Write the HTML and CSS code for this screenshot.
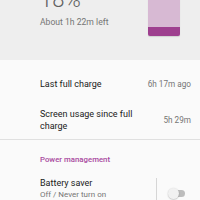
FILE: index.html
```html
<!DOCTYPE html>
<html>
<head>
<meta charset="utf-8">
<link rel="stylesheet" href="styles.css">
</head>
<body>
<div class="header">
  <div class="info">
    <div class="pct">18%</div>
    <div class="left">About 1h 22m left</div>
  </div>
  <div class="battery"><div class="level"></div></div>
</div>
<div class="list">
  <div class="row row1">
    <div class="title">Last full charge</div>
    <div class="value">6h 17m ago</div>
  </div>
  <div class="row row2">
    <div class="title wrap">Screen usage since full charge</div>
    <div class="value">5h 29m</div>
  </div>
  <div class="divider"></div>
  <div class="category">Power management</div>
  <div class="row row3">
    <div class="texts">
      <div class="title">Battery saver</div>
      <div class="summary">Off / Never turn on</div>
    </div>
    <div class="vsep"></div>
    <div class="switch"><div class="track"></div><div class="thumb"></div></div>
  </div>
</div>
</body>
</html>
```
FILE: styles.css
```css
html, body {
  margin: 0;
  padding: 0;
}
body {
  background: #fafafa;
  font-family: Roboto, "Noto Sans", sans-serif;
  width: 200px;
  height: 200px;
  overflow: hidden;
}
.header {
  background: #eeeeee;
  height: 60px;
  display: flex;
  padding-left: 40px;
  box-sizing: border-box;
}
.info {
  margin-top: -11px;
}
.pct {
  font-size: 22px;
  line-height: 22px;
  font-weight: 300;
  color: #616161;
}
.left {
  margin-top: 5px;
  font-size: 8.6px;
  line-height: 12px;
  color: #757575;
}
.battery {
  margin-left: auto;
  margin-right: 20px;
  margin-top: -20px;
  width: 32px;
  height: 56px;
  background: #d7b9d3;
  border-radius: 0 0 2px 2px;
  display: flex;
  flex-direction: column;
  justify-content: flex-end;
  overflow: hidden;
  box-shadow: 0 1px 1px rgba(0,0,0,0.12);
}
.level {
  height: 9px;
  background: #9e3f8f;
}
.row {
  display: flex;
  align-items: center;
  padding-left: 40px;
  padding-right: 9px;
}
.title {
  font-size: 9px;
  line-height: 12px;
  color: #212121;
}
.value {
  margin-left: auto;
  font-size: 8.2px;
  line-height: 12px;
  color: #757575;
}
.row1 {
  padding-top: 18px;
  padding-bottom: 18px;
}
.row2 {
  padding-top: 0;
  padding-bottom: 7px;
}
.wrap {
  width: 100px;
}
.divider {
  height: 1px;
  background: #e0e0e0;
}
.category {
  padding-left: 40px;
  margin-top: 14px;
  font-size: 7.8px;
  line-height: 12px;
  font-weight: 500;
  color: #a8499e;
}
.row3 {
  margin-top: 11px;
  align-items: flex-start;
  padding-right: 15px;
}
.summary {
  font-size: 8px;
  line-height: 12px;
  color: #757575;
}
.vsep {
  margin-left: auto;
  margin-top: 1px;
  width: 1px;
  height: 30px;
  background: #d6d6d6;
}
.switch {
  position: relative;
  margin-left: 11px;
  margin-top: 11px;
  width: 17px;
  height: 11px;
}
.track {
  position: absolute;
  left: 3px;
  top: 2px;
  width: 14px;
  height: 7px;
  border-radius: 4px;
  background: #bdbdbd;
}
.thumb {
  position: absolute;
  left: 0;
  top: 0;
  width: 11px;
  height: 11px;
  border-radius: 50%;
  background: #f1f1f1;
  box-shadow: 0 0.5px 1.5px rgba(0,0,0,0.3);
}
```
